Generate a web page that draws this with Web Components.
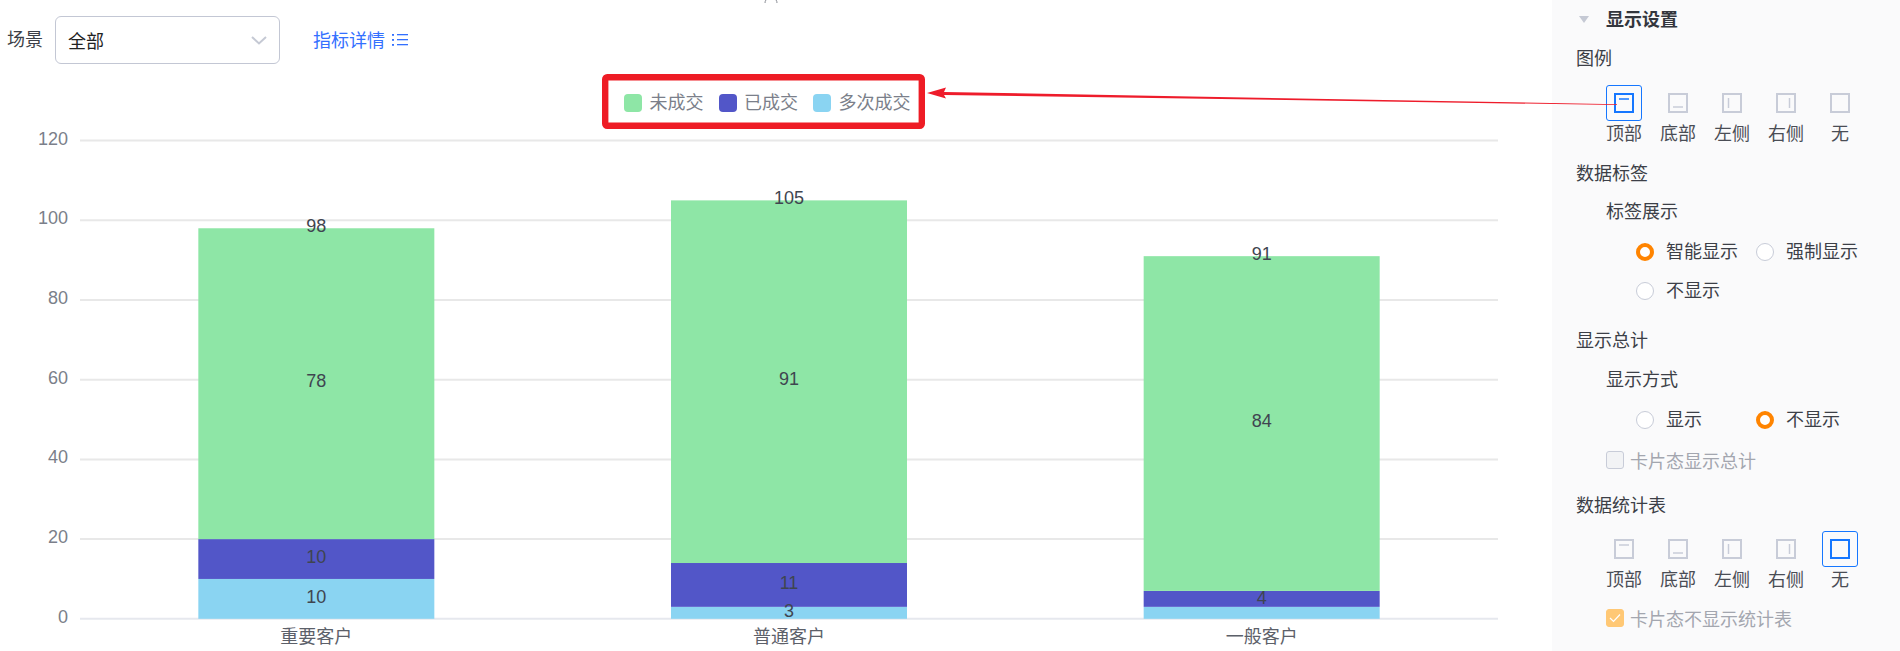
<!DOCTYPE html>
<html lang="zh">
<head>
<meta charset="utf-8">
<title>显示设置</title>
<style>
  html, body { margin: 0; height: 651px; overflow: hidden; background: #fff; }
  body { font: 18px "Liberation Sans", "Noto Sans CJK SC", sans-serif; color: #3c3f47; }
</style>
</head>
<body>
<report-page>
  <scene-bar slot="main"></scene-bar>
  <chart-legend slot="main"></chart-legend>
  <stacked-chart slot="main"></stacked-chart>

  <panel-title slot="side">显示设置</panel-title>
  <panel-label slot="side" style="margin-top:5px">图例</panel-label>
  <position-picker slot="side" selected="0" style="margin-top:8px"></position-picker>
  <panel-label slot="side" style="margin-top:8px">数据标签</panel-label>
  <panel-label slot="side" sub style="margin-top:2px">标签展示</panel-label>
  <radio-group slot="side" style="margin-top:2px">
    <radio-option checked>智能显示</radio-option>
    <radio-option>强制显示</radio-option>
    <radio-option>不显示</radio-option>
  </radio-group>
  <panel-label slot="side" style="margin-top:13px">显示总计</panel-label>
  <panel-label slot="side" sub style="margin-top:3px">显示方式</panel-label>
  <radio-group slot="side" style="margin-top:2px">
    <radio-option>显示</radio-option>
    <radio-option checked>不显示</radio-option>
  </radio-group>
  <check-option slot="side" style="margin-top:3px">卡片态显示总计</check-option>
  <panel-label slot="side" style="margin-top:10px">数据统计表</panel-label>
  <position-picker slot="side" selected="4" style="margin-top:7px"></position-picker>
  <check-option slot="side" checked style="margin-top:6px">卡片态不显示统计表</check-option>

  <red-callout slot="over"></red-callout>
</report-page>

<script>
'use strict';

function shadow(el, html) {
  const template = document.createElement('template');
  template.innerHTML = html;
  el.attachShadow({ mode: 'open' }).appendChild(template.content.cloneNode(true));
}

customElements.define('report-page', class extends HTMLElement {
  constructor() {
    super();
    shadow(this, `
      <style>
      :host { display: grid; grid-template-columns: 1552px 348px; height: 651px; position: relative; overflow: hidden; }
      .main { display: flex; flex-direction: column; min-width: 0; }
      .side { display: flex; flex-direction: column; background: #fafafb; padding-left: 24px; }
      </style>
      <div class="main"><slot name="main"></slot></div>
      <div class="side"><slot name="side"></slot></div>
      <slot name="over"></slot>`);
  }
});

customElements.define('scene-bar', class extends HTMLElement {
  constructor() {
    super();
    shadow(this, `
      <style>
      :host { display: flex; align-items: flex-start; height: 80px; box-sizing: border-box; padding: 16px 0 0 7px; }
      .name { width: 48px; line-height: 48px; color: #3c3f47; }
      .select {
        width: 225px; height: 48px; box-sizing: border-box; border: 1px solid #c3c7d4; border-radius: 6px;
        display: flex; align-items: center; justify-content: space-between; padding: 0 12px; color: #222;
      }
      .link { display: flex; align-items: center; gap: 7px; margin-left: 33px; height: 46px; color: #3370ff; }
      .link svg { margin-top: 2px; }
      svg { display: block; }
      </style>
      <span class="name">场景</span>
      <div class="select">
        <span>全部</span>
        <svg width="16" height="9" viewBox="0 0 16 9"><path d="M1 1l7 6.500 7-6.500" fill="none" stroke="#c5c9d4" stroke-width="2"/></svg>
      </div>
      <div class="link">
        <span>指标详情</span>
        <svg width="16" height="12" viewBox="0 0 16 12" fill="#3370ff">
          <rect x="0" y="0" width="2" height="1.800"/><rect x="0" y="5" width="2" height="1.800"/><rect x="0" y="10" width="2" height="1.800"/>
          <rect x="5" y="0" width="11" height="1.300"/><rect x="5" y="5" width="11" height="1.300"/><rect x="5" y="10" width="11" height="1.300"/>
        </svg>
      </div>`);
  }
});

customElements.define('chart-legend', class extends HTMLElement {
  constructor() {
    super();
    const items = [['#8ee6a6', '未成交'], ['#5256c8', '已成交'], ['#8ad4f2', '多次成交']];
    shadow(this, `
      <style>
      :host { display: flex; align-items: center; gap: 15px; height: 45px; padding-left: 624px; color: #7b7f8a; }
      .item { display: flex; align-items: center; gap: 7.500px; }
      i { width: 18px; height: 18px; border-radius: 4px; }
      span { margin-top: -4px; }
      </style>
      ${items.map(([c, t]) => `<div class="item"><i style="background:${c}"></i><span>${t}</span></div>`).join('')}`);
  }
});

customElements.define('stacked-chart', class extends HTMLElement {
  constructor() {
    super();
    const zero = 618.8;
    const unit = 3.985;
    const left = 80;
    const right = 1498;
    const band = (right - left) / 3;
    const barWidth = 236;
    const data = [
      { name: '重要客户', sky: 10, indigo: 10, green: 78, skyLabel: true, nudge: 0 },
      { name: '普通客户', sky: 3, indigo: 11, green: 91, skyLabel: true, nudge: 1 },
      { name: '一般客户', sky: 3, indigo: 4, green: 84, skyLabel: false, nudge: 2 }
    ];
    const y = v => zero - v * unit;
    let out = '';
    for (let v = 0; v <= 120; v += 20) {
      const color = v ? '#e8e8e8' : '#e6e8ee';
      out += `<line x1="${left}" x2="${right}" y1="${y(v)}" y2="${y(v)}" stroke="${color}" stroke-width="2"/>`;
      out += `<text class="axis" x="68" y="${y(v) + 4}" text-anchor="end">${v}</text>`;
    }
    data.forEach((d, i) => {
      const cx = left + band * (i + 0.5);
      const x = cx - barWidth / 2;
      const total = d.sky + d.indigo + d.green;
      const bar = (from, value, fill) =>
        `<rect x="${x}" y="${y(from + value)}" width="${barWidth}" height="${value * unit}" fill="${fill}"/>`;
      const label = (at, text, nudge) => `<text class="value" x="${cx}" y="${y(at) + 3.500 + nudge}" text-anchor="middle">${text}</text>`;
      out += bar(0, d.sky, '#8ad4f2') + bar(d.sky, d.indigo, '#5256c8') + bar(d.sky + d.indigo, d.green, '#8ee6a6');
      if (d.skyLabel) out += label(d.sky / 2, d.sky, 1);
      out += label(d.sky + d.indigo / 2, d.indigo, d.nudge);
      out += label(d.sky + d.indigo + d.green / 2, d.green, 0) + label(total, total, 0);
      out += `<text class="cat" x="${cx}" y="643" text-anchor="middle">${d.name}</text>`;
    });
    shadow(this, `
      <style>
      :host { display: block; height: 526px; }
      svg { display: block; font: 18px "Liberation Sans", "Noto Sans CJK SC", sans-serif; }
      .axis { fill: #7b7f8a; }
      .value { fill: #3f4550; }
      .cat { fill: #5c6069; }
      </style>
      <svg width="1552" height="526" viewBox="0 125 1552 526">${out}</svg>`);
  }
});

customElements.define('panel-title', class extends HTMLElement {
  constructor() {
    super();
    shadow(this, `
      <style>
      :host { display: flex; align-items: center; height: 36px; font-weight: 700; color: #33363d; }
      i { width: 0; height: 0; margin: 2px 17px 0 3px; border: 5.500px solid transparent; border-top: 7px solid #c5c9d4; border-bottom: 0; }
      </style>
      <i></i><slot></slot>`);
  }
});

customElements.define('panel-label', class extends HTMLElement {
  constructor() {
    super();
    shadow(this, `
      <style>
      :host { display: block; line-height: 36px; height: 36px; color: #3c3f47; }
      :host([sub]) { padding-left: 30px; }
      </style>
      <slot></slot>`);
  }
});

customElements.define('position-picker', class extends HTMLElement {
  constructor() {
    super();
    const marks = [
      '<path d="M5 6h10"/>', '<path d="M5 14h10"/>', '<path d="M6.500 5v10"/>', '<path d="M13.500 5v10"/>', ''
    ];
    const names = ['顶部', '底部', '左侧', '右侧', '无'];
    const selected = Number(this.getAttribute('selected'));
    shadow(this, `
      <style>
      :host { display: flex; padding-left: 30px; }
      .item { width: 54px; }
      .btn { width: 36px; height: 36px; box-sizing: border-box; border: 1px solid transparent; border-radius: 3px; display: flex; align-items: center; justify-content: center; color: #c8ccd8; }
      .on .btn { border-color: #1677ff; color: #1677ff; }
      .name { width: 36px; height: 27px; line-height: 27px; text-align: center; white-space: nowrap; color: #4a4d55; }
      svg { display: block; fill: none; stroke: currentColor; }
      </style>
      ${names.map((n, i) => `
        <div class="item ${i === selected ? 'on' : ''}">
          <div class="btn"><svg width="20" height="20" viewBox="0 0 20 20"><rect x="1" y="1" width="18" height="18" stroke-width="2"/><g stroke-width="1.500">${marks[i]}</g></svg></div>
          <div class="name">${n}</div>
        </div>`).join('')}`);
  }
});

customElements.define('radio-group', class extends HTMLElement {
  constructor() {
    super();
    shadow(this, `
      <style>
      :host { display: grid; grid-template-columns: 120px 120px; grid-auto-rows: 39px; padding-left: 60px; }
      </style>
      <slot></slot>`);
  }
});

customElements.define('radio-option', class extends HTMLElement {
  constructor() {
    super();
    shadow(this, `
      <style>
      :host { display: flex; align-items: center; gap: 12px; white-space: nowrap; color: #3c3f47; }
      i { width: 18px; height: 18px; box-sizing: border-box; border: 1px solid #c8ccd8; border-radius: 50%; background: #fff; flex: none; }
      :host([checked]) i { border: 4.500px solid #ff8400; }
      span { margin-top: -3px; }
      </style>
      <i></i><span><slot></slot></span>`);
  }
});

customElements.define('check-option', class extends HTMLElement {
  constructor() {
    super();
    shadow(this, `
      <style>
      :host { display: flex; align-items: center; gap: 6px; height: 36px; padding-left: 30px; color: #a3a6af; white-space: nowrap; }
      .box { width: 18px; height: 18px; box-sizing: border-box; border: 1px solid #c8ccd8; border-radius: 3px; background: #f2f3f5; flex: none; display: flex; align-items: center; justify-content: center; }
      svg { display: none; }
      :host([checked]) .box { background: #ffc875; border-color: #ffc875; }
      :host([checked]) svg { display: block; }
      </style>
      <div class="box"><svg width="12" height="10" viewBox="0 0 12 10"><path d="M1 5l3.500 3.500L11 1.500" fill="none" stroke="#fff" stroke-width="1.200"/></svg></div>
      <slot></slot>`);
  }
});

// red annotation drawn on top of the screenshot
customElements.define('red-callout', class extends HTMLElement {
  constructor() {
    super();
    shadow(this, `
      <style>
      :host { position: absolute; inset: 0; pointer-events: none; }
      svg { display: block; }
      </style>
      <svg width="1900" height="651" viewBox="0 0 1900 651">
        <path d="M766 0q-1 1-1 3M776 0q1 1 1 3" fill="none" stroke="#8a8d95" stroke-width="1"/>
        <rect x="605.200" y="77.200" width="316.600" height="48.600" rx="2" fill="none" stroke="#ee1c25" stroke-width="6.400"/>
        <polygon points="927,93 946,87.500 944,92 1617,104.200 1617,105 944,95 946,98.500" fill="#ee1c2b"/>
      </svg>`);
  }
});
</script>
</body>
</html>
